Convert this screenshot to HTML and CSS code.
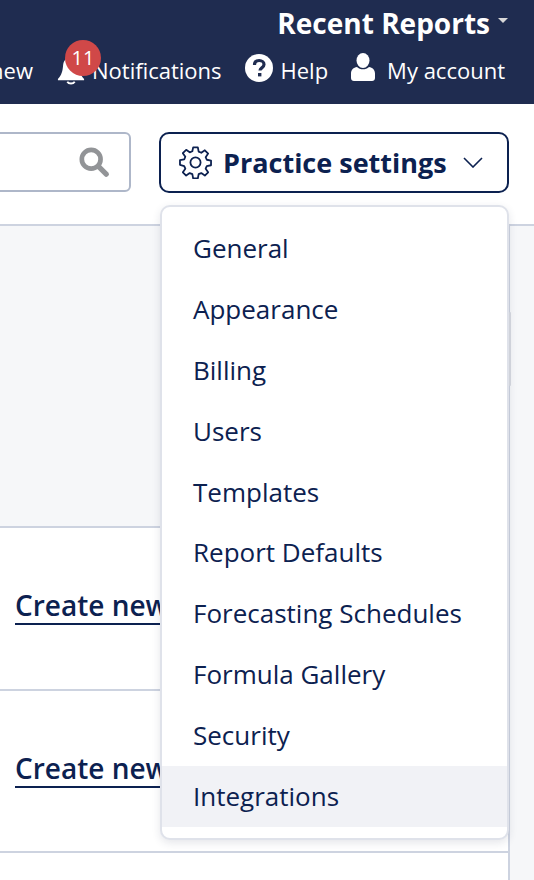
FILE: index.html
```html
<!DOCTYPE html>
<html lang="en">
<head>
<meta charset="utf-8">
<title>Practice settings</title>
<link rel="stylesheet" href="styles.css">
</head>
<body>
<header class="topbar">
  <div class="recent">Recent Reports<span class="caret"></span></div>
  <nav class="topnav">
    <span class="nav-item">What's new</span>
    <span class="nav-item notif">
      <svg class="bell" viewBox="0 0 30 30"><path d="M15 0c5 0 8 4 8.500 9 .5 6 1.500 10 5.500 14.500v1.500H1v-1.500C5 19 6 15 6.500 9 7 4 10 0 15 0z" fill="#fff"/><path d="M11 26.500a4.500 3.500 0 0 0 8 0" fill="none" stroke="#fff" stroke-width="2"/></svg>
      <span class="badge">11</span>
      <span>Notifications</span>
    </span>
    <span class="nav-item help">
      <svg class="ico-help" viewBox="0 0 28 28"><circle cx="14" cy="14" r="14" fill="#fff"/><path d="M9.500 11c0-3 2-4.500 4.700-4.500 2.800 0 4.800 1.700 4.800 4 0 3.400-4 3.300-4 6" fill="none" stroke="#1f2c50" stroke-width="3.200"/><rect x="13" y="19" width="3.400" height="3.400" fill="#1f2c50"/></svg>
      <span>Help</span>
    </span>
    <span class="nav-item account">
      <svg class="ico-user" viewBox="0 0 24 28"><ellipse cx="12" cy="7.500" rx="6.500" ry="7.500" fill="#fff"/><path d="M6 14c1.600 1.500 3.700 2.300 6 2.300s4.400-.8 6-2.300c3.500.4 6 3 6 6.500v4.500c0 1.700-1.300 3-3 3H3c-1.700 0-3-1.300-3-3v-4.500C0 17 2.500 14.400 6 14z" fill="#fff"/></svg>
      <span>My account</span>
    </span>
  </nav>
</header>

<section class="toolbar">
  <div class="search">
    <svg class="ico-search" viewBox="0 0 32 32"><circle cx="13" cy="13" r="10" fill="none" stroke="#929497" stroke-width="5"/><path d="M21 21l8 8" stroke="#929497" stroke-width="5.500" stroke-linecap="round"/></svg>
  </div>
  <button class="settings-btn">
    <svg class="ico-gear" viewBox="0 0 24 24"><path fill="none" stroke="#0c2150" stroke-width="1.300" stroke-linejoin="round" d="M10.300 1h3.400l.6 3.100 1.900.8 2.600-1.800 2.400 2.400-1.800 2.600.8 1.900 3.100.6v3.400l-3.100.6-.8 1.900 1.800 2.600-2.400 2.400-2.600-1.800-1.900.8-.6 3.100h-3.400l-.6-3.100-1.900-.8-2.600 1.800-2.400-2.400 1.800-2.600-.8-1.900L.7 13.700v-3.400l3.100-.6.8-1.900-1.800-2.600 2.400-2.400 2.600 1.800 1.900-.8z"/><circle cx="12" cy="12" r="3.700" fill="none" stroke="#0c2150" stroke-width="1.300"/></svg>
    <span class="settings-label">Practice settings</span>
    <svg class="ico-chev" viewBox="0 0 20 11"><path d="M1 1l9 9 9-9" fill="none" stroke="#0c2150" stroke-width="1.600"/></svg>
  </button>
</section>

<main class="content">
  <div class="table">
    <div class="panel"></div>
    <div class="row"><a class="create" href="#">Create new</a></div>
    <div class="row"><a class="create" href="#">Create new</a></div>
    <div class="row row-empty"></div>
  </div>
  <div class="side"></div>
</main>

<div class="menu">
  <div class="menu-item">General</div>
  <div class="menu-item">Appearance</div>
  <div class="menu-item">Billing</div>
  <div class="menu-item">Users</div>
  <div class="menu-item">Templates</div>
  <div class="menu-item">Report Defaults</div>
  <div class="menu-item">Forecasting Schedules</div>
  <div class="menu-item">Formula Gallery</div>
  <div class="menu-item">Security</div>
  <div class="menu-item active">Integrations</div>
</div>
<div class="scroll-thumb"></div>
</body>
</html>
```
FILE: styles.css
```css
* { box-sizing: border-box; }
html, body { margin: 0; height: 880px; overflow: hidden; }
body {
  width: 534px;
  position: relative;
  background: #fff;
  font-family: "Open Sans", "Liberation Sans", sans-serif;
  color: #0c2150;
}
.topbar {
  height: 104px;
  background: #1f2c50;
  color: #fff;
  display: flex;
  flex-direction: column;
  align-items: flex-end;
  padding: 6px 29px 0 0;
  overflow: hidden;
  white-space: nowrap;
}
.recent {
  font-size: 28px;
  font-weight: 700;
  line-height: 34px;
  display: flex;
  align-items: center;
  margin-right: -3px;
}
.caret {
  width: 0; height: 0;
  margin-left: 8px;
  margin-bottom: 6px;
  border-left: 5px solid transparent;
  border-right: 5px solid transparent;
  border-top: 5px solid #d8d8d8;
}
.topnav {
  display: flex;
  align-items: center;
  gap: 23px;
  font-size: 22px;
  height: 40px;
  margin-top: 10px;
}
.nav-item { display: flex; align-items: center; position: relative; }
.bell { width: 30px; height: 28px; margin-right: 6px; margin-top: 2px; }
.badge {
  position: absolute;
  left: 9px; top: -15px;
  width: 36px; height: 36px;
  border-radius: 50%;
  background: #d04848;
  font-size: 20px;
  line-height: 36px;
  text-align: center;
}
.ico-help { width: 28px; height: 28px; margin-right: 8px; margin-top: -5px; }
.ico-user { width: 24px; height: 28px; margin-right: 12px; margin-top: -6px; }
.toolbar {
  height: 122px;
  border-bottom: 2px solid #cdd3e0;
  padding: 28px 25px 0 0;
  display: flex;
  justify-content: flex-end;
  gap: 28px;
}
.search {
  flex: 1;
  height: 60px;
  margin-left: -10px;
  border: 2px solid #aeb7c9;
  border-radius: 6px;
  display: flex;
  align-items: center;
  justify-content: flex-end;
  padding-right: 20px;
}
.ico-search { width: 30px; height: 30px; }
.settings-btn {
  width: 350px;
  height: 61px;
  background: #fff;
  border: 2px solid #0c2150;
  border-radius: 10px;
  display: flex;
  align-items: center;
  padding: 0 24px 0 18px;
  font: 700 27px "Open Sans", "Liberation Sans", sans-serif;
  color: #0c2150;
}
.ico-gear { width: 33px; height: 33px; margin-right: 11px; flex: none; }
.settings-label { flex: 1; text-align: left; white-space: nowrap; }
.ico-chev { width: 20px; height: 11px; flex: none; }
.content { display: flex; height: 654px; }
.table { width: 510px; border-right: 2px solid #cdd3e0; flex: none; }
.panel { height: 300px; background: #f6f7f9; }
.row {
  height: 162.500px;
  border-top: 2px solid #cdd3e0;
  padding: 59px 0 0 15px;
}
.row-empty { height: 30px; }
.create {
  font-size: 28px;
  font-weight: 600;
  color: #0c2150;
  white-space: nowrap;
  text-decoration: none;
  border-bottom: 2px solid #0c2150;
  line-height: 36px;
  display: inline-block;
}
.side { flex: 1; background: #f6f7f9; }
.menu {
  position: absolute;
  left: 160px; top: 205px;
  width: 349px; height: 635px;
  background: #fff;
  border: 2px solid #dfe2ea;
  border-radius: 10px;
  box-shadow: 0 3px 8px rgba(40, 50, 80, .12);
  padding: 11px 0 10px;
}
.menu-item {
  height: 60.900px;
  line-height: 60.900px;
  padding-left: 31px;
  font-size: 26px;
  color: #0c2150;
  white-space: nowrap;
}
.menu-item.active { background: #f1f2f6; }
.scroll-thumb {
  position: absolute;
  left: 509px; top: 312px;
  width: 2px; height: 74px;
  background: #cfd2da;
  border-radius: 1px;
}
```
